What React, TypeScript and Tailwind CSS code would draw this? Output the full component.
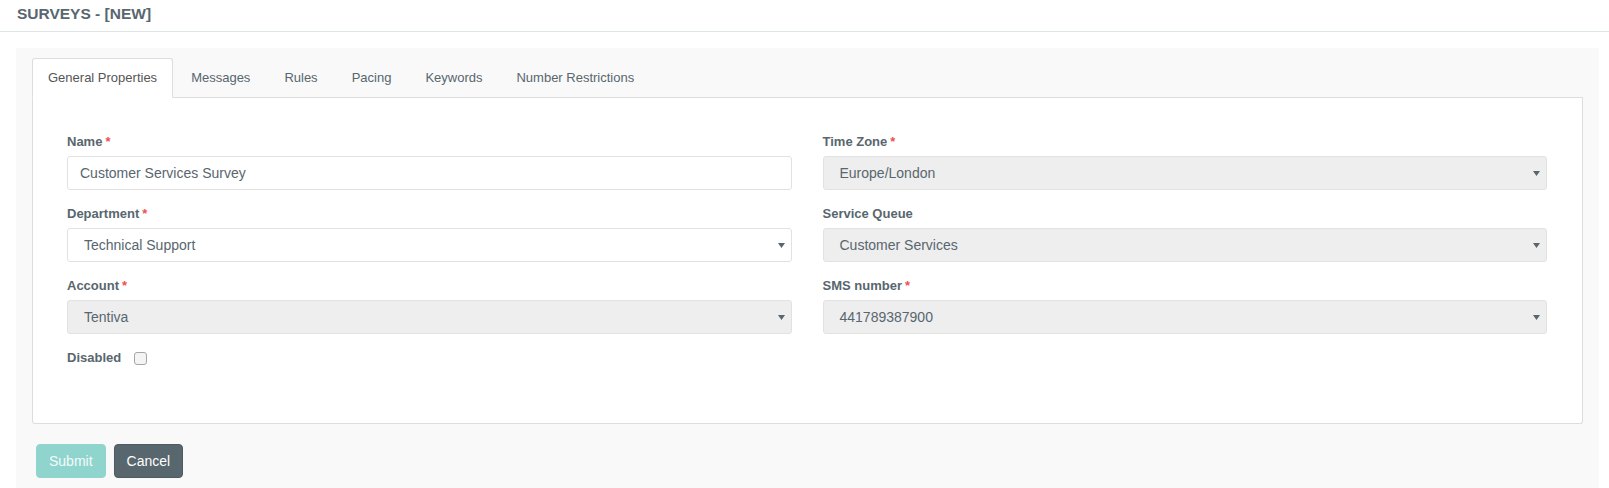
import { useState } from 'react';

const tabs = ['General Properties', 'Messages', 'Rules', 'Pacing', 'Keywords', 'Number Restrictions'];

function Arrow() {
  return (
    <svg width="7" height="5" viewBox="0 0 7 5" className="shrink-0">
      <path d="M0 0 H7 L3.5 5 Z" fill="#58666e" />
    </svg>
  );
}

function Label({ text, required }: { text: string; required?: boolean }) {
  return (
    <label className="block text-[13px] leading-[18px] font-bold text-[#58666e] mb-[5px]">
      {text}
      {required && <span className="text-[#f05050] ml-[3px]">*</span>}
    </label>
  );
}

function SelectBox({ value, disabled }: { value: string; disabled?: boolean }) {
  return (
    <div
      className={`h-[34px] flex items-center justify-between pl-[16px] pr-[6px] border border-[#e2e2e2] rounded-[3px] text-[14px] text-[#58666e] ${
        disabled ? 'bg-[#eeeeee]' : 'bg-white'
      }`}
    >
      <span>{value}</span>
      <Arrow />
    </div>
  );
}

export default function App() {
  const [activeTab, setActiveTab] = useState(0);
  const [name, setName] = useState('Customer Services Survey');

  return (
    <div className="min-h-screen bg-white text-[#58666e]" style={{ fontFamily: '"Liberation Sans", Arial, sans-serif' }}>
      {/* Header */}
      <header className="h-[32px] border-b border-[#dee5e7] px-[17px] pb-[3px] flex items-center">
        <h1 className="text-[15.5px] font-bold text-[#58666e]">SURVEYS - [NEW]</h1>
      </header>

      {/* Panel */}
      <div className="mt-[16px] ml-[16px] mr-[10px] bg-[#f9f9f9] px-[16px] pt-[10px] pb-[11px]">
        {/* Tabs */}
        <ul className="flex border-b border-[#dddddd]">
          {tabs.map((tab, i) => (
            <li key={tab} className="mr-[2px] -mb-px">
              <button
                onClick={() => setActiveTab(i)}
                className={`h-[40px] px-[15px] text-[13px] border rounded-t-[3px] ${
                  activeTab === i
                    ? 'bg-white border-[#dddddd] border-b-white text-[#555555]'
                    : 'border-transparent text-[#58666e]'
                }`}
              >
                {tab}
              </button>
            </li>
          ))}
        </ul>

        {/* Tab content */}
        <div className="bg-white border border-t-0 border-[#dddddd] rounded-b-[3px] pt-[35px] pl-[34px] pr-[35px] pb-[56px]">
          <div className="grid grid-cols-2 gap-x-[31px]">
            <div>
              <div className="mb-[15px]">
                <Label text="Name" required />
                <input
                  value={name}
                  onChange={(e) => setName(e.target.value)}
                  className="w-full h-[34px] px-[12px] border border-[#e2e2e2] rounded-[3px] text-[14px] text-[#58666e] outline-none"
                />
              </div>
              <div className="mb-[15px]">
                <Label text="Department" required />
                <SelectBox value="Technical Support" />
              </div>
              <div className="mb-[15px]">
                <Label text="Account" required />
                <SelectBox value="Tentiva" disabled />
              </div>
              <div className="flex items-center h-[18px]">
                <span className="text-[13px] leading-[18px] font-bold text-[#58666e]">Disabled</span>
                <span className="ml-[13px] w-[13px] h-[13px] rounded-[3px] border border-[#a6a6a6] bg-[#f4f4f4]" />
              </div>
            </div>
            <div>
              <div className="mb-[15px]">
                <Label text="Time Zone" required />
                <SelectBox value="Europe/London" disabled />
              </div>
              <div className="mb-[15px]">
                <Label text="Service Queue" />
                <SelectBox value="Customer Services" disabled />
              </div>
              <div className="mb-[15px]">
                <Label text="SMS number" required />
                <SelectBox value="441789387900" disabled />
              </div>
            </div>
          </div>
        </div>

        {/* Actions */}
        <div className="mt-[20px] ml-[4px] flex gap-[8px]">
          <button className="h-[34px] px-[12px] rounded-[4px] bg-[#8fd4cd] border border-[#8fd4cd] text-[14px] text-white/90">
            Submit
          </button>
          <button className="h-[34px] px-[12px] rounded-[4px] bg-[#58666e] border border-[#4f5b62] text-[14px] text-white">
            Cancel
          </button>
        </div>
      </div>
    </div>
  );
}
